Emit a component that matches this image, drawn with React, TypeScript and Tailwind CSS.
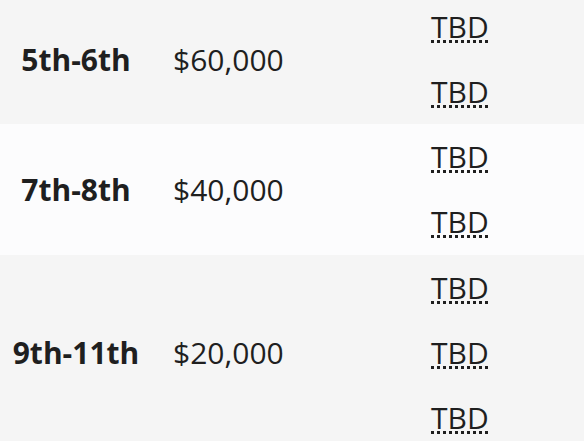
import React from 'react';

type Row = {
  place: string;
  prize: string;
  slots: number;
  shaded: boolean;
};

const rows: Row[] = [
  { place: '5th-6th', prize: '$60,000', slots: 2, shaded: true },
  { place: '7th-8th', prize: '$40,000', slots: 2, shaded: false },
  { place: '9th-11th', prize: '$20,000', slots: 3, shaded: true },
];

export default function App() {
  return (
    <div className="h-[441px] w-[584px] overflow-hidden bg-white font-['Open_Sans',sans-serif] text-[30px] text-[#1f1f1f]">
      <div className="-mt-[6px]">
        {rows.map((row) => (
          <div
            key={row.place}
            className={`grid grid-cols-[152px_258px_1fr] items-center ${row.shaded ? 'bg-[#f5f5f5]' : 'bg-[#fcfcfd] pb-px'}`}
          >
            <div className="text-center font-bold">{row.place}</div>
            <div className="pl-[21px]">{row.prize}</div>
            <div className="flex flex-col pl-[21px]">
              {Array.from({ length: row.slots }).map((_, i) => (
                <div key={i} className="flex h-[65px] items-center">
                  <abbr title="To be determined">TBD</abbr>
                </div>
              ))}
            </div>
          </div>
        ))}
      </div>
    </div>
  );
}
